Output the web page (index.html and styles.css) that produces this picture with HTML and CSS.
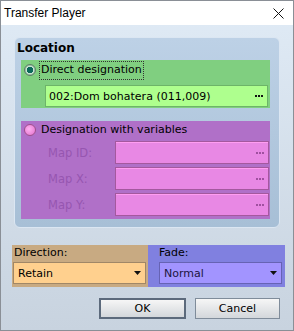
FILE: index.html
```html
<!DOCTYPE html>
<html lang="en">
<head>
  <meta charset="UTF-8" />
  <title>Transfer Player</title>
  <link rel="stylesheet" href="styles.css">
</head>
<body>
  <div class="window">
    <div class="titlebar">
      <span>Transfer Player</span>
      <svg class="close" width="11" height="11" viewBox="0 0 11 11">
        <path d="M0.5 0.5 L10.5 10.5 M10.5 0.5 L0.5 10.5" stroke="#111" stroke-width="1" fill="none" />
      </svg>
    </div>

    <div class="client">
      <div class="group">
        <div class="group-title">Location</div>

        <div class="panel green">
          <div class="radio-row">
            <span class="radio checked"></span>
            <span class="focus">Direct designation</span>
          </div>
          <div class="field green-field">
            <span>002:Dom bohatera (011,009)</span>
            <svg class="dots" width="8" height="2" viewBox="0 0 8 2"><rect x="0" width="2" height="2" /><rect x="3" width="2" height="2" /><rect x="6" width="2" height="2" /></svg>
          </div>
        </div>

        <div class="panel purple">
          <div class="radio-row">
            <span class="radio pink"></span>
            <span class="focus off">Designation with variables</span>
          </div>
          <div class="var-row">
            <span class="var-label">Map ID:</span>
            <div class="field pink-field">
              <svg class="dots" width="8" height="2" viewBox="0 0 8 2"><rect x="0" width="2" height="2" /><rect x="3" width="2" height="2" /><rect x="6" width="2" height="2" /></svg>
            </div>
          </div>
          <div class="var-row">
            <span class="var-label">Map X:</span>
            <div class="field pink-field">
              <svg class="dots" width="8" height="2" viewBox="0 0 8 2"><rect x="0" width="2" height="2" /><rect x="3" width="2" height="2" /><rect x="6" width="2" height="2" /></svg>
            </div>
          </div>
          <div class="var-row">
            <span class="var-label">Map Y:</span>
            <div class="field pink-field">
              <svg class="dots" width="8" height="2" viewBox="0 0 8 2"><rect x="0" width="2" height="2" /><rect x="3" width="2" height="2" /><rect x="6" width="2" height="2" /></svg>
            </div>
          </div>
        </div>
      </div>

      <div class="options">
        <div class="option direction">
          <div class="option-label">Direction:</div>
          <div class="combo">
            <span>Retain</span>
            <svg width="7" height="4" viewBox="0 0 7 4"><path d="M0 0 H7 L3.5 4 Z" fill="#111" /></svg>
          </div>
        </div>
        <div class="option fade">
          <div class="option-label">Fade:</div>
          <div class="combo">
            <span>Normal</span>
            <svg width="7" height="4" viewBox="0 0 7 4"><path d="M0 0 H7 L3.5 4 Z" fill="#111" /></svg>
          </div>
        </div>
      </div>

      <div class="buttons">
        <button class="btn default">OK</button>
        <button class="btn">Cancel</button>
      </div>
    </div>
  </div>
</body>
</html>
```

FILE: styles.css
```css
* {
  margin: 0;
  padding: 0;
  box-sizing: border-box;
}

body {
  font-family: "DejaVu Sans", sans-serif;
  font-size: 11px;
  color: #000;
  background: #fff;
}

.window {
  width: 294px;
  height: 331px;
  border: 1px solid #8a8f96;
  display: flex;
  flex-direction: column;
  background: linear-gradient(#e0ebf6, #c8d3df);
}

.titlebar {
  height: 24px;
  background: #fff;
  display: flex;
  align-items: center;
  justify-content: space-between;
  padding: 0 9px 0 3px;
  font-family: "Liberation Sans", sans-serif;
  font-size: 12px;
}

.close {
  display: block;
}

.client {
  flex: 1;
  padding-top: 12px;
}

.group {
  margin-left: 13px;
  width: 266px;
  height: 191px;
  border: 1px solid #dbe6f2;
  border-radius: 6px;
  background: linear-gradient(#bdd1e6, #a7bfd6);
  padding-left: 6px;
}

.group-title {
  height: 22px;
  line-height: 21px;
  margin-left: -4px;
  font-weight: bold;
  font-size: 12px;
}

.panel {
  width: 249px;
}

.green {
  height: 48px;
  background: #80cf80;
}

.purple {
  height: 98px;
  margin-top: 13px;
  background: #b070c8;
}

.radio-row {
  height: 20px;
  display: flex;
  align-items: center;
  padding-left: 3px;
}

.purple .radio-row {
  height: 18px;
  margin-bottom: 2px;
}

.radio {
  width: 12px;
  height: 12px;
  border-radius: 50%;
  margin-right: 3px;
}

.radio.checked {
  border: 1px solid #5f7f6a;
  background: radial-gradient(circle, #0a6a5a 0 3px, #c8e6d0 3.5px 4px, #9cc0a8 4.5px);
}

.radio.pink {
  border: 1px solid #a0508c;
  background: radial-gradient(circle at 40% 40%, #ffb0f0, #e070cc);
}

.focus {
  padding: 1px 1px 2px 1px;
  border: 1px dotted #333;
  line-height: 14px;
}

.focus.off {
  border-color: transparent;
}

.field {
  height: 22px;
  display: flex;
  align-items: center;
  justify-content: space-between;
  padding: 0 4px 0 3px;
}

.dots {
  display: block;
}

.green-field {
  width: 223px;
  margin: 5px 0 0 24px;
  background: #aeff8e;
  border: 1px solid #6db468;
}

.green-field .dots {
  fill: #111;
}

.var-row {
  display: flex;
  align-items: center;
  margin-top: 3px;
}

.radio-row + .var-row {
  margin-top: 2px;
}

.var-label {
  width: 94px;
  padding-left: 27px;
  color: #9656b0;
  font-size: 11.5px;
}

.pink-field {
  width: 154px;
  height: 23px;
  justify-content: flex-end;
  background: #e888e4;
  border: 1px solid #a4589e;
  box-shadow: inset 0 1px 0 #ff9ef2;
}

.pink-field .dots {
  fill: #a050a0;
}

.options {
  display: flex;
  margin: 17px 0 0 11px;
}

.option {
  height: 42px;
}

.option-label {
  height: 17px;
  line-height: 15px;
  padding-left: 2px;
}

.direction {
  width: 136px;
  background: #c8aa82;
}

.direction .combo {
  width: 133px;
  margin-left: 1px;
  background: #ffd08e;
  border: 1px solid #a08767;
}

.fade {
  width: 137px;
  background: #8080e0;
}

.fade .option-label {
  padding-left: 11px;
}

.fade .combo {
  width: 123px;
  margin-left: 11px;
  background: #a294ff;
  border: 1px solid #6663b4;
  color: #1c1440;
}

.combo {
  height: 22px;
  display: flex;
  align-items: center;
  justify-content: space-between;
  padding: 0 4px 0 4px;
}

.buttons {
  display: flex;
  gap: 9px;
  margin: 11px 0 0 98px;
}

.btn {
  width: 85px;
  height: 21px;
  font-family: "DejaVu Sans", sans-serif;
  font-size: 11px;
  color: #000;
  border: 1px solid #7f8c9a;
  background: linear-gradient(#f6f6f6, #d3d7db);
}

.btn.default {
  width: 87px;
  border: 2px solid #5c6a7c;
}
```
